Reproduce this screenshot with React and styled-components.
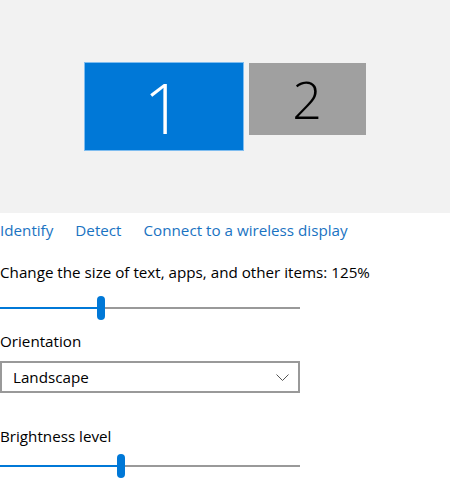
import React from 'react'
import styled, { createGlobalStyle } from 'styled-components'

const Global = createGlobalStyle`
  html, body {
    margin: 0;
    padding: 0;
    background: #ffffff;
  }
  body {
    font-family: "Open Sans", "Noto Sans", "Liberation Sans", sans-serif;
    color: #000;
  }
`

const Page = styled.div`
  width: 450px;
  height: 497px;
  overflow: hidden;
  background: #fff;
`

const Preview = styled.div`
  height: 213px;
  background: #f2f2f2;
  display: flex;
  justify-content: center;
  align-items: flex-start;
  gap: 6px;
  padding-top: 63px;
  box-sizing: border-box;
`

const Monitor = styled.div`
  width: ${p => p.w}px;
  height: ${p => p.h}px;
  background: ${p => (p.active ? '#0078d7' : '#a0a0a0')};
  color: ${p => (p.active ? '#ffffff' : '#000000')};
  box-shadow: ${p => (p.active ? '0 0 0 1px #7fbdf0' : 'none')};
  display: flex;
  align-items: center;
  justify-content: center;
  font-weight: 300;
  font-size: ${p => p.fs}px;
  line-height: 1;
`

const Body = styled.div`
  padding-top: 7px;
`

const Links = styled.div`
  display: flex;
  gap: 22px;
  height: 20px;
  align-items: center;
`

const Link = styled.a`
  color: #1a73c2;
  font-size: 15.2px;
  text-decoration: none;
  cursor: pointer;
  white-space: nowrap;
`

const Label = styled.div`
  font-size: 15.2px;
  line-height: 20px;
  height: 20px;
  margin-top: ${p => p.mt}px;
  white-space: nowrap;
`

const Slider = styled.div`
  width: 300px;
  height: 24px;
  margin-top: ${p => p.mt}px;
  display: flex;
  align-items: center;
`

const Track = styled.div`
  height: 2px;
  flex: ${p => (p.fill ? 'none' : '1')};
  background: ${p => (p.fill ? '#0078d7' : '#999999')};
`

const Thumb = styled.div`
  width: 8px;
  height: 24px;
  border-radius: 4px;
  background: #0078d7;
  flex: none;
`

const Select = styled.div`
  margin-top: 10px;
  width: 300px;
  height: 32px;
  box-sizing: border-box;
  border: 2px solid #999999;
  display: flex;
  align-items: center;
  justify-content: space-between;
  padding: 0 9px 0 11px;
  font-size: 15.2px;
`

const Chevron = () => (
  <svg width="13" height="7" viewBox="0 0 13 7">
    <path d="M0.5 0.5 L6.5 6.5 L12.5 0.5" fill="none" stroke="#555" strokeWidth="1" />
  </svg>
)

function Range({ value, mt }) {
  return (
    <Slider mt={mt}>
      <Track fill="1" style={{ width: value }} />
      <Thumb />
      <Track />
    </Slider>
  )
}

export default function App() {
  return (
    <Page>
      <Global />
      <Preview>
        <Monitor active w={158} h={87} fs={70}>1</Monitor>
        <Monitor w={117} h={72} fs={52}>2</Monitor>
      </Preview>
      <Body>
        <Links>
          <Link>Identify</Link>
          <Link>Detect</Link>
          <Link>Connect to a wireless display</Link>
        </Links>
        <Label mt={22}>Change the size of text, apps, and other items: 125%</Label>
        <Range value={97} mt={14} />
        <Label mt={11}>Orientation</Label>
        <Select>
          <span>Landscape</span>
          <Chevron />
        </Select>
        <Label mt={33}>Brightness level</Label>
        <Range value={117} mt={8} />
      </Body>
    </Page>
  )
}
